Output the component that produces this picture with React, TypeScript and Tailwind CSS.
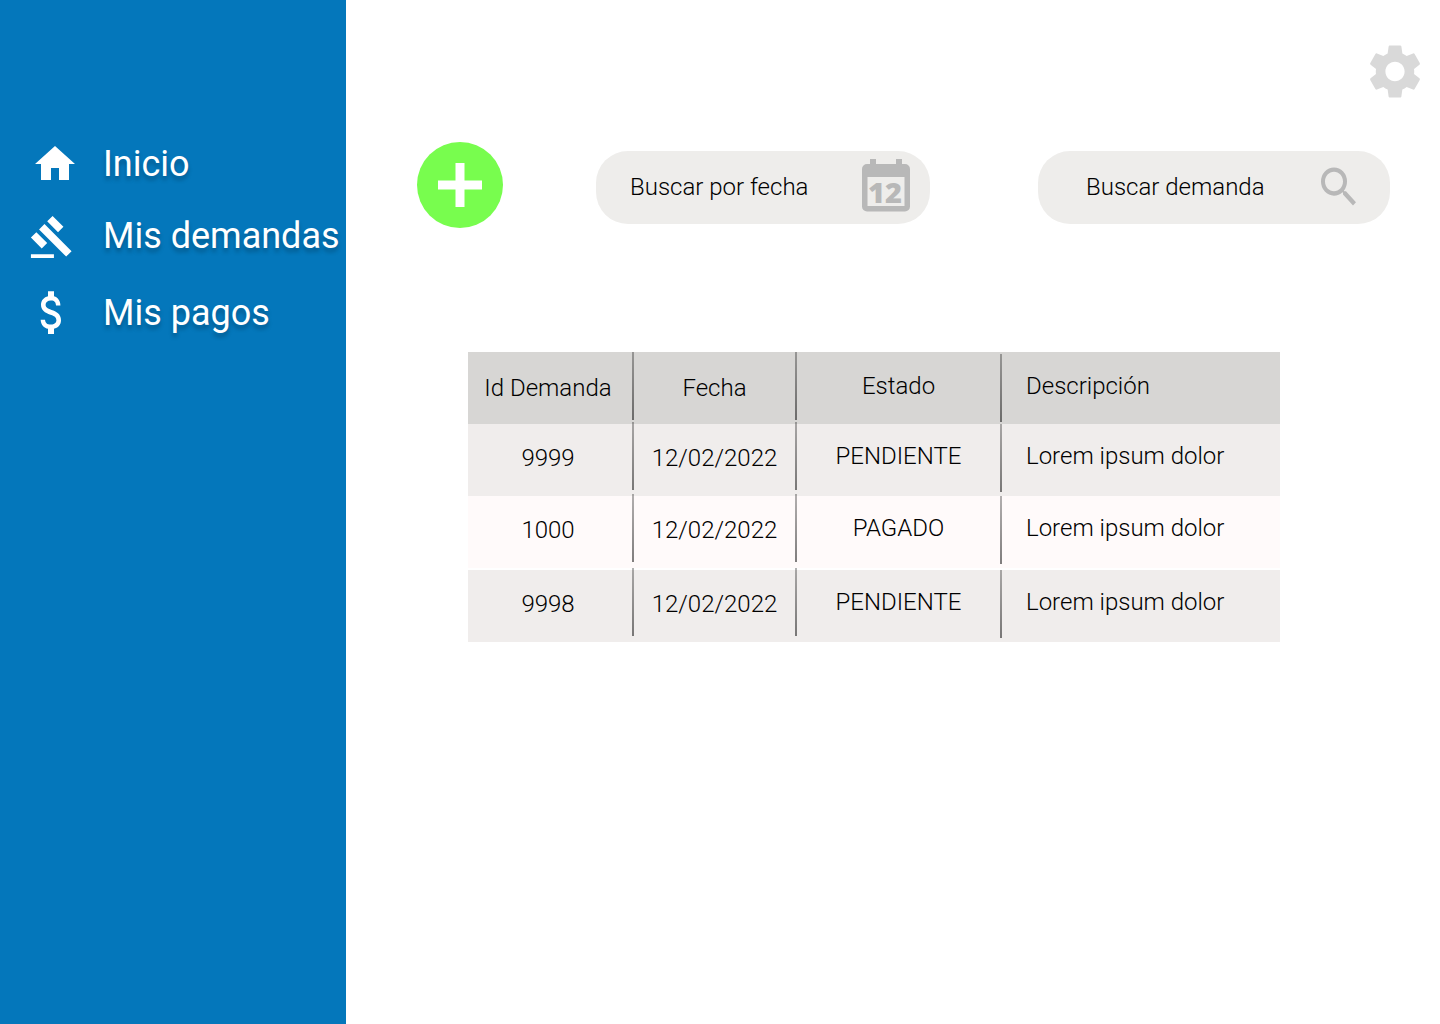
import React from "react";
import { MdAttachMoney, MdGavel, MdHome, MdSearch, MdSettings } from "react-icons/md";

const navItems = [
  { label: "Inicio", icon: <MdHome className="ml-auto size-12" /> },
  { label: "Mis demandas", icon: <MdGavel className="mt-0.5 ml-px size-[46px]" /> },
  { label: "Mis pagos", icon: <MdAttachMoney preserveAspectRatio="none" className="h-[57px] w-12" /> },
];

const claims = [
  { id: "9999", date: "12/02/2022", status: "PENDIENTE", description: "Lorem ipsum dolor" },
  { id: "1000", date: "12/02/2022", status: "PAGADO", description: "Lorem ipsum dolor" },
  { id: "9998", date: "12/02/2022", status: "PENDIENTE", description: "Lorem ipsum dolor" },
];

function CalendarIcon() {
  return (
    <svg viewBox="0 0 48 58" className="h-[58px] w-12 shrink-0" fill="#b8b8b8" aria-hidden="true">
      <rect x="8" y="1" width="6" height="8" />
      <rect x="34" y="1" width="6" height="8" />
      <path
        fillRule="evenodd"
        d="M5 6h38a5 5 0 0 1 5 5v37.500a5 5 0 0 1-5 5H5a5 5 0 0 1-5-5V11a5 5 0 0 1 5-5zM5.500 19v29h37V19z"
      />
      <text x="23" y="45" textAnchor="middle" className="font-['Open_Sans',sans-serif] text-[29px] font-extrabold">
        12
      </text>
    </svg>
  );
}

function Divider() {
  return <span className="h-[68px] w-0.5 shrink-0 bg-linear-to-b from-black/30 to-black/50" />;
}

function Sidebar() {
  return (
    <aside className="w-[346px] shrink-0 bg-[#0477bb] pt-[140px] pl-7 text-white">
      <nav>
        <ul className="flex flex-col gap-6">
          {navItems.map((item) => (
            <li key={item.label}>
              <a href="#" className="flex items-center gap-6">
                <span className="flex w-[51px] shrink-0">{item.icon}</span>
                <span className="whitespace-nowrap text-4xl text-shadow-[0_4px_4px_rgba(0,0,0,0.25)]">
                  {item.label}
                </span>
              </a>
            </li>
          ))}
        </ul>
      </nav>
    </aside>
  );
}

function ClaimsTable() {
  return (
    <table className="w-full table-fixed border-separate border-spacing-0 text-left">
      <colgroup>
        <col className="w-[166px]" />
        <col className="w-[163px]" />
        <col className="w-[205px]" />
        <col />
      </colgroup>
      <thead className="bg-[#d7d6d4]">
        <tr>
          <th scope="col" className="p-0 font-light">
            <div className="flex h-[72px]">
              <span className="flex-1 self-center pr-1 text-center">Id Demanda</span>
              <Divider />
            </div>
          </th>
          <th scope="col" className="p-0 font-light">
            <div className="flex h-[72px]">
              <span className="flex-1 self-center text-center">Fecha</span>
              <Divider />
            </div>
          </th>
          <th scope="col" className="p-0 font-light">
            <div className="flex h-[72px] items-center">
              <span className="flex-1 pb-1 text-center">Estado</span>
              <Divider />
            </div>
          </th>
          <th scope="col" className="p-0 pb-1 pl-6 font-light">
            Descripción
          </th>
        </tr>
      </thead>
      <tbody>
        {claims.map((claim) => (
          <tr key={claim.id} className="group odd:bg-[#f0edec] even:bg-[#fffafa]">
            <td className="p-0 group-even:border-b-2 group-even:border-white">
              <div className="-mt-0.5 mb-0.5 flex h-[72px]">
                <span className="flex-1 self-center pr-1 text-center">{claim.id}</span>
                <Divider />
              </div>
            </td>
            <td className="p-0 group-even:border-b-2 group-even:border-white">
              <div className="-mt-0.5 mb-0.5 flex h-[72px]">
                <span className="flex-1 self-center text-center">{claim.date}</span>
                <Divider />
              </div>
            </td>
            <td className="p-0 group-even:border-b-2 group-even:border-white">
              <div className="flex h-[72px]">
                <span className="flex-1 self-center pb-2 text-center">{claim.status}</span>
                <Divider />
              </div>
            </td>
            <td className="p-0 pb-2 pl-6 group-even:border-b-2 group-even:border-white">{claim.description}</td>
          </tr>
        ))}
      </tbody>
    </table>
  );
}

export default function App() {
  return (
    <div className="flex min-h-screen bg-white font-['Roboto',sans-serif] text-black">
      <Sidebar />
      <main className="min-w-0 flex-1 text-2xl font-light">
        <div className="flex justify-end pt-[39px] pr-[13px]">
          <button type="button" aria-label="Configuración" className="text-[#d9d9d9]">
            <MdSettings preserveAspectRatio="none" className="h-[65px] w-16" />
          </button>
        </div>

        <div className="mt-[38px] flex items-center gap-[93px] pr-[50px] pl-[71px]">
          <button
            type="button"
            aria-label="Agregar demanda"
            className="flex size-[86px] shrink-0 items-center justify-center rounded-full bg-[#78fd4e] text-white"
          >
            <svg viewBox="0 0 44 44" className="size-11" fill="currentColor" aria-hidden="true">
              <path d="M17.500 0h9v17.500H44v9H26.500V44h-9V26.500H0v-9h17.500z" />
            </svg>
          </button>

          <div className="mt-1 grid min-w-0 flex-1 grid-cols-[334fr_352fr] gap-[108px]">
            <label className="flex h-[73px] min-w-0 items-center rounded-[32px] bg-[#eeedeb] pr-5 pl-[34px]">
              <input
                type="text"
                aria-label="Buscar por fecha"
                placeholder="Buscar por fecha"
                className="min-w-0 flex-1 bg-transparent outline-none placeholder:text-black"
              />
              <CalendarIcon />
            </label>

            <label className="flex h-[73px] min-w-0 items-center rounded-[32px] bg-[#eeedeb] pr-[27px] pl-12">
              <input
                type="text"
                aria-label="Buscar demanda"
                placeholder="Buscar demanda"
                className="min-w-0 flex-1 bg-transparent outline-none placeholder:text-black"
              />
              <MdSearch preserveAspectRatio="none" className="h-[52px] w-12 shrink-0 text-[#b8b8b8]" />
            </label>
          </div>
        </div>

        <div className="mt-[124px] pr-40 pl-[122px]">
          <ClaimsTable />
        </div>
      </main>
    </div>
  );
}
